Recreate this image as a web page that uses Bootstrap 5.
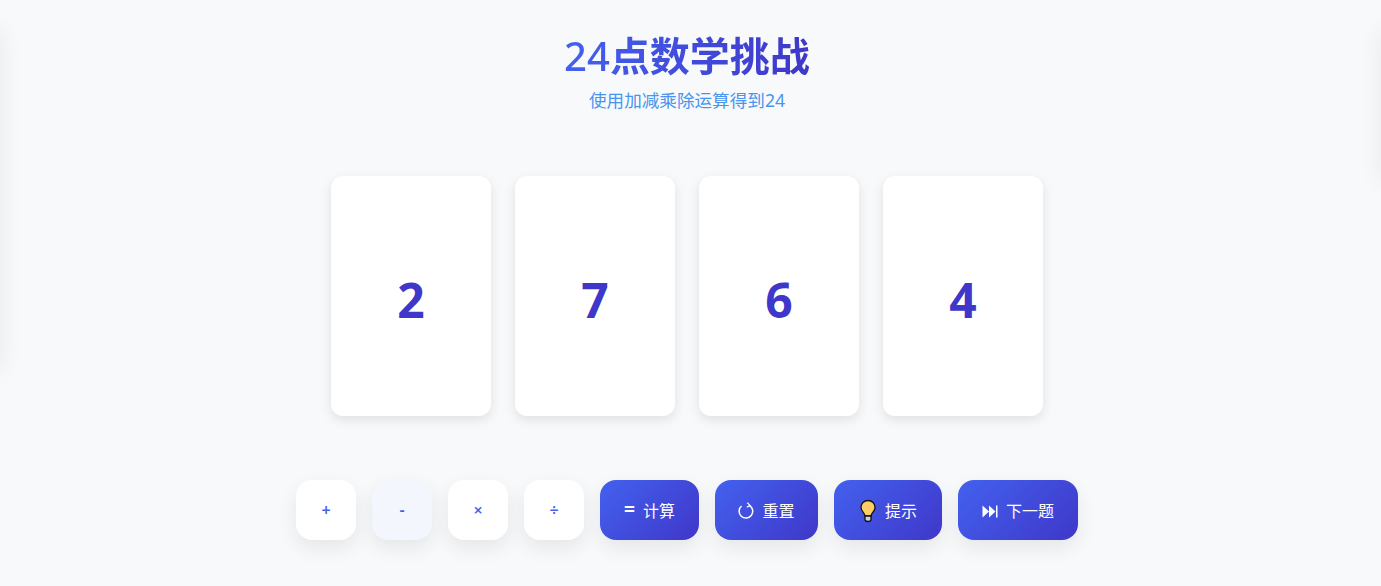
<!DOCTYPE html>
<html>
<head>
<meta charset="utf-8">
<title>24点数学挑战</title>
<link href="https://cdn.jsdelivr.net/npm/bootstrap@5.3.0/dist/css/bootstrap.min.css" rel="stylesheet">
<style>
html,body{height:100%;overflow:hidden}
body{background:#f8f9fa;font-family:"Noto Sans","Noto Sans CJK SC",sans-serif;position:relative}
.stage{width:1374px;height:586px}
.game-title{margin:0;padding-top:31px;font-size:40px;line-height:50px;font-weight:600;color:transparent;background:linear-gradient(90deg,#4361ee,#3f37c9);-webkit-background-clip:text;background-clip:text;width:max-content}
.title-num{font-weight:500}
.game-sub{margin:6px 0 0;font-size:17.6px;line-height:26px;color:#4895ef}
.card-row{margin-top:63px;gap:24px}
.num-card{width:160px;height:240px;background:#fff;border-radius:12px;box-shadow:0 4px 12px rgba(0,0,0,.1);font-size:48px;font-weight:700;color:#3f37c9;line-height:1;padding-top:8px}
.btn-row{margin-top:64px;gap:16px}
.op-btn,.act-btn{height:60px;border:0;border-radius:16px;box-shadow:0 8px 20px rgba(0,0,0,.08);font-size:16px;padding:0;font-family:inherit}
.op-btn{width:60px;background:#fff;color:#4361ee;font-weight:600}
.op-btn.is-hover{background:#f3f6fc}
.act-btn{background:linear-gradient(135deg,#4361ee,#3f37c9);color:#fff;gap:8px;padding-top:2px}
.act-b1{width:99px}.act-b2{width:103px}.act-b3{width:108px}.act-b4{width:120px}
.ico-eq{font-size:19.2px;font-weight:700;line-height:1;padding-bottom:5px}
.side-l,.side-r{position:absolute;background:#f8f9fa;box-shadow:0 0 24px rgba(0,0,0,.07)}
.side-l{left:-300px;top:28px;width:300px;height:342px}
.side-r{right:-300px;top:30px;width:300px;height:150px}
</style>
</head>
<body>
<div class="side-l"></div>
<div class="side-r"></div>
<main class="stage d-flex flex-column align-items-center">
  <h1 class="game-title"><span class="title-num">24</span>点数学挑战</h1>
  <p class="game-sub">使用加减乘除运算得到24</p>
  <section class="card-row d-flex">
    <div class="num-card d-flex align-items-center justify-content-center">2</div>
    <div class="num-card d-flex align-items-center justify-content-center">7</div>
    <div class="num-card d-flex align-items-center justify-content-center">6</div>
    <div class="num-card d-flex align-items-center justify-content-center">4</div>
  </section>
  <section class="btn-row d-flex">
    <button type="button" class="op-btn">+</button>
    <button type="button" class="op-btn is-hover">-</button>
    <button type="button" class="op-btn">×</button>
    <button type="button" class="op-btn">÷</button>
    <button type="button" class="act-btn act-b1 d-flex align-items-center justify-content-center"><span class="ico-eq">=</span><span>计算</span></button>
    <button type="button" class="act-btn act-b2 d-flex align-items-center justify-content-center">
      <svg width="16" height="18" viewBox="0 0 16 18" aria-hidden="true"><path d="M11.200 3.300A6.800 6.800 0 1 1 3.600 4" fill="none" stroke="#fff" stroke-width="1.500"/><path d="M9.200 .6l2.800 2.700-3.200 1.900" fill="none" stroke="#fff" stroke-width="1.300"/></svg>
      <span>重置</span></button>
    <button type="button" class="act-btn act-b3 d-flex align-items-center justify-content-center">
      <svg width="18" height="24" viewBox="0 0 18 24" aria-hidden="true"><path d="M9 1.500C5 1.500 2 4.500 2 8.200c0 2.400 1.200 3.900 2.400 5.400.9 1.100 1.600 2.200 1.600 3.400h6c0-1.200.7-2.300 1.600-3.400C15 12.100 16 10.600 16 8.200 16 4.500 13 1.500 9 1.500z" fill="#ffcc66" stroke="#111" stroke-width="1.300"/><path d="M6 17h6v3.500c0 1-1 2-3 2s-3-1-3-2z" fill="#ccd2dc" stroke="#111" stroke-width="1.300"/></svg>
      <span>提示</span></button>
    <button type="button" class="act-btn act-b4 d-flex align-items-center justify-content-center">
      <svg width="16" height="13" viewBox="0 0 16 13" aria-hidden="true"><path d="M.5.500L7 6.500.5 12.500zM7 .500L13.500 6.500 7 12.500z" fill="#fff"/><rect x="14" y=".5" width="1.500" height="12" fill="#fff"/></svg>
      <span>下一题</span></button>
  </section>
</main>
</body>
</html>
